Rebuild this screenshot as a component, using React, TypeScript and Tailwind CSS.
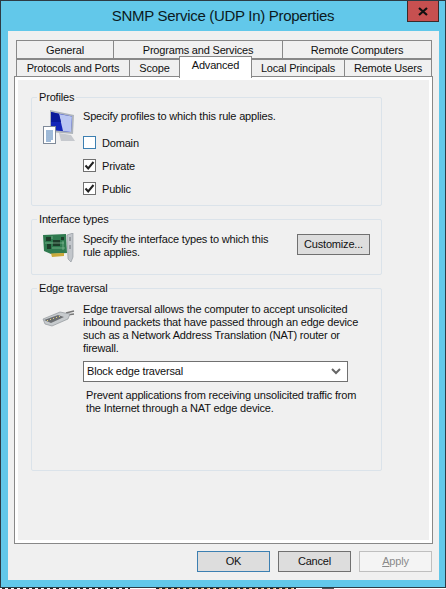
const uiFont = "font-['Liberation_Sans','Arial',sans-serif]";

function ProfilesIcon() {
	return (
		<svg width="36" height="38" viewBox="0 0 36 38">
			<path d="M9 2 L33 7 L32 26 L9 24 Z" fill="#aeb4bc" />
			<path d="M10 4 L31 8.5 L30 24 L10 22 Z" fill="#1426b8" />
			<path d="M18 6 L31 8.5 L30 24 L22 23 Z" fill="#b9c6f2" />
			<path d="M10 4 L18 6 L20 14 L10 14 Z" fill="#0a1a9a" />
			<path d="M18 25 L30 27 L34 33 L20 33 Z" fill="#c6c9ce" />
			<rect x="2.5" y="18.5" width="12" height="17" fill="#fff" stroke="#7f8a99" />
			<path d="M5 23h7M5 25h7M5 27h7M5 29h7M5 31h7M5 33h5" stroke="#3f74b0" />
		</svg>
	);
}

function NicIcon() {
	return (
		<svg width="33" height="30" viewBox="0 0 33 30">
			<path d="M1 2 L24 1 L25 20 L9 21 L2 18 Z" fill="#2f7a4f" />
			<path d="M4 4h5v4H4zM11 7h7v6h-7zM5 11h4v5H5zM19 4h3v3h-3z" fill="#1d3d2a" />
			<path d="M3 10h19M10 15h13M21 8v9M10 3v3" stroke="#8ac09b" strokeWidth="0.7" />
			<path d="M9 20.5 L22 20 L22 23 L10 24 Z" fill="#c9a93a" />
			<path d="M25 2 L31 0 L31 24 L29 29 L26 26 Z" fill="#c2c6cb" stroke="#8a9097" strokeWidth="0.6" />
			<path d="M28 4v4M28 12v4" stroke="#6f747a" strokeWidth="1" />
		</svg>
	);
}

function CableIcon() {
	return (
		<svg width="33" height="20" viewBox="0 0 33 20">
			<path d="M24 5 L32 3 M25 7 L32 6" stroke="#777" strokeWidth="1.4" />
			<path d="M1 11 L18 4 L28 6 L26 11 L10 18 L3 16 Z" fill="#c6cacd" stroke="#85898e" strokeWidth="0.6" />
			<path d="M2 12 L16 7 L22 9 L9 15 Z" fill="#6c6f72" />
			<path d="M5 12l1 1M8 11l1 1M11 10l1 1M14 9l1 1M17 8l1 1" stroke="#e3d27a" strokeWidth="1" />
		</svg>
	);
}

function CheckRow({ label, checked, focused }: { label: string; checked?: boolean; focused?: boolean }) {
	return (
		<div className="flex h-[13px] items-center gap-[6px]">
			<span
				className={
					"flex size-[13px] items-center justify-center border bg-white " +
					(focused ? "border-[#3c7fb1]" : "border-[#707070]")
				}
			>
				{checked ? (
					<svg width="11" height="11" viewBox="0 0 11 11">
						<path d="M1.5 5.5 L4.2 8.5 L9.5 2" fill="none" stroke="#222" strokeWidth="2" />
					</svg>
				) : null}
			</span>
			<span className="pt-[1px]">{label}</span>
		</div>
	);
}

function Group({ title, className, children }: { title: string; className: string; children: React.ReactNode }) {
	return (
		<fieldset className={"ml-[13px] w-[351px] rounded-[2px] border border-[#dbe3ea] px-[5px] " + className}>
			<legend className="px-[2px] leading-[14px]">{title}</legend>
			{children}
		</fieldset>
	);
}

function Tab({ label, className }: { label: string; className: string }) {
	return (
		<div className={"flex items-center justify-center border border-[#888] " + className}>
			{label}
		</div>
	);
}

function DialogButton({ label, className }: { label: React.ReactNode; className: string }) {
	return <button className={"h-[21px] w-[73px] border " + className}>{label}</button>;
}

export default function App() {
	return (
		<div className={"h-[589px] w-[446px] overflow-hidden bg-white text-[11px] leading-[13px] tracking-[-0.18px] text-[#111] " + uiFont}>
			<div className="flex h-[588px] flex-col border border-[#2d3b45] bg-[#62c8ea]">
				<div className="relative flex h-[30px] shrink-0 items-center justify-center pb-[1px] text-[15px] tracking-[-0.3px] text-[#0b1a22]">
					SNMP Service (UDP In) Properties
					<div className="absolute top-0 right-[6px] flex h-[21px] w-[32px] items-center justify-center border border-t-0 border-[#3a2a2a] bg-[#c75050]">
						<svg width="10" height="9" viewBox="0 0 10 9">
							<path d="M1 1 L9 8 M9 1 L1 8" stroke="#111" strokeWidth="2.2" />
						</svg>
					</div>
				</div>
				<div className="mr-[6px] ml-[7px] flex grow flex-col bg-[#f0f0f0] px-[6px] pt-[9px]">
					<div className="flex h-[19px] pl-[2px]">
						<Tab label="General" className="w-[98px] pt-[1px]" />
						<Tab label="Programs and Services" className="-ml-px w-[170px] pt-[1px]" />
						<Tab label="Remote Computers" className="-ml-px w-[150px] pt-[1px]" />
					</div>
					<div className="flex h-[17px] items-start pl-[2px]">
						<Tab label="Protocols and Ports" className="h-[18px] w-[114px]" />
						<Tab label="Scope" className="-ml-px h-[18px] w-[51px]" />
						<Tab label="Advanced" className="relative z-10 -mt-[3px] -ml-px h-[22px] w-[73px] border-b-0 bg-white pb-[4px]" />
						<Tab label="Local Principals" className="-ml-px h-[18px] w-[94px]" />
						<Tab label="Remote Users" className="-ml-px h-[18px] w-[88px]" />
					</div>
					<div className="h-[468px] w-[419px] border border-[#888] bg-white p-[3px]">
						<div className="h-full bg-[#f0f0f0] pt-[10px]">
							<Group title="Profiles" className="h-[116px]">
								<div className="flex">
									<div className="mt-[4px] ml-[4px]">
										<ProfilesIcon />
									</div>
									<div className="ml-[6px]">
										<p className="mt-[6px]">Specify profiles to which this rule applies.</p>
										<div className="mt-[13px] flex flex-col gap-[10px]">
											<CheckRow label="Domain" focused />
											<CheckRow label="Private" checked />
											<CheckRow label="Public" checked />
										</div>
									</div>
								</div>
							</Group>
							<Group title="Interface types" className="mt-[6px] h-[63px]">
								<div className="flex">
									<div className="mt-[7px] ml-[5px]">
										<NicIcon />
									</div>
									<p className="mt-[7px] ml-[8px]">
										Specify the interface types to which this
										<br />
										rule applies.
									</p>
									<DialogButton label="Customize..." className="mt-[8px] mr-[6px] ml-auto border-[#707070] bg-[#dddddd]" />
								</div>
							</Group>
							<Group title="Edge traversal" className="mt-[6px] h-[190px]">
								<div className="flex">
									<div className="mt-[13px] ml-[5px]">
										<CableIcon />
									</div>
									<div className="ml-[8px]">
										<p className="mt-[8px]">
											Edge traversal allows the computer to accept unsolicited
											<br />
											inbound packets that have passed through an edge device
											<br />
											such as a Network Address Translation (NAT) router or
											<br />
											firewall.
										</p>
										<div className="mt-[6px] flex h-[21px] w-[265px] items-center justify-between border border-[#707070] bg-white pr-[6px] pl-[3px]">
											<span>Block edge traversal</span>
											<svg width="10" height="7" viewBox="0 0 10 7">
												<path d="M1 1 L5 5 L9 1" fill="none" stroke="#666" strokeWidth="2" />
											</svg>
										</div>
										<p className="mt-[7px] ml-[3px]">
											Prevent applications from receiving unsolicited traffic from
											<br />
											the Internet through a NAT edge device.
										</p>
									</div>
								</div>
							</Group>
						</div>
					</div>
					<div className="flex justify-end gap-[8px] pt-[7px] pr-[1px]">
						<DialogButton label="OK" className="border-[#3c7fb1] bg-[#dddddd]" />
						<DialogButton label="Cancel" className="border-[#707070] bg-[#dddddd]" />
						<DialogButton
							label={<><span className="underline">A</span>pply</>}
							className="border-[#bfbfbf] bg-[#f4f4f4] text-[#8a8a8a]"
						/>
					</div>
				</div>
				<div className="h-[7px] shrink-0" />
			</div>
			<div className="flex h-px gap-[26px] pl-[2px]">
				<div className="w-[128px] bg-[repeating-linear-gradient(90deg,#222_0,#222_3px,#fff_3px,#fff_6px)]" />
				<div className="w-[140px] bg-[repeating-linear-gradient(90deg,#222_0,#222_3px,#e8a040_3px,#fff_6px)]" />
				<div className="w-[12px] bg-[#555]" />
			</div>
		</div>
	);
}
